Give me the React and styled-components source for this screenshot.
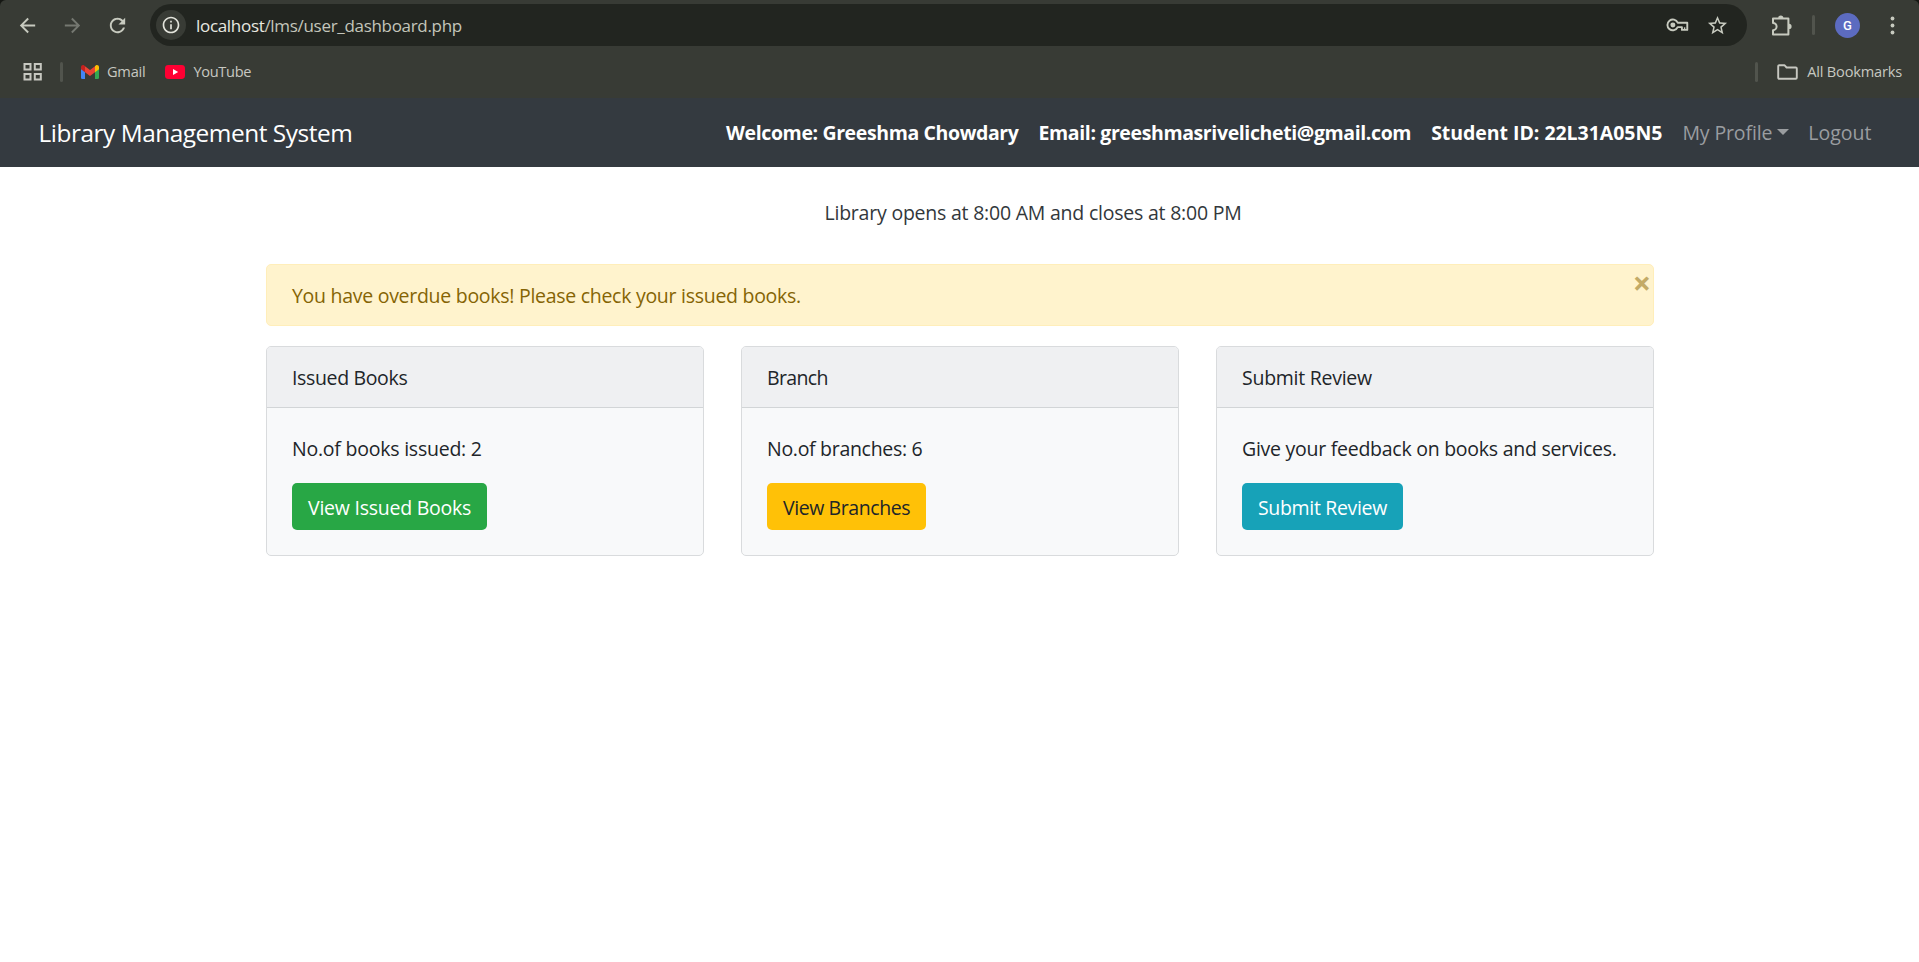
import React from "react";
import styled, { createGlobalStyle } from "styled-components";

const GlobalStyle = createGlobalStyle`
  *, *::before, *::after { box-sizing: border-box; }
  body {
    margin: 0;
    background: #fff;
    color: #212529;
    font-family: "Open Sans", "Noto Sans", sans-serif;
    font-size: 19.5px;
    line-height: 30px;
    overflow: hidden;
  }
`;

/* ---------- Browser chrome ---------- */

const Chrome = styled.header`
  height: 98px;
  background: #383b35;
  border-radius: 6px 6px 0 0;
  color: #c7c8c1;
`;

const ChromeFrame = styled.div`
  background: #151713;
`;

const Toolbar = styled.div`
  display: flex;
  align-items: center;
  height: 50px;
  padding: 0 15px 0 16px;
`;

const IconButton = styled.button`
  display: flex;
  align-items: center;
  justify-content: center;
  width: 23px;
  height: 23px;
  margin: 0 ${(p) => p.$gap || 0}px 0 0;
  padding: 0;
  border: 0;
  background: none;
  color: ${(p) => (p.$muted ? "#757871" : "#c7cabf")};
`;

const AddressBar = styled.div`
  display: flex;
  align-items: center;
  flex: 1;
  height: 42px;
  margin-right: 23px;
  padding: 0 20px 0 6px;
  border-radius: 21px;
  background: #222520;
`;

const SiteInfo = styled.span`
  display: flex;
  align-items: center;
  justify-content: center;
  width: 30px;
  height: 30px;
  border-radius: 50%;
  background: #383b35;
  color: #e3e4dc;
`;

const Url = styled.span`
  flex: 1;
  margin-left: 10px;
  padding-top: 1px;
  font-size: 17px;
  letter-spacing: -0.31px;
  color: #c4c5bb;
`;

const Host = styled.span`
  color: #e8e9e0;
`;

const Divider = styled.span`
  width: 3px;
  height: 20px;
  border-radius: 2px;
  background: #51544d;
`;

const Avatar = styled.span`
  display: flex;
  align-items: center;
  justify-content: center;
  width: 25px;
  height: 25px;
  margin: 0 21px 0 20px;
  border-radius: 50%;
  background: #5c6bc0;
  color: #fff;
  font: 500 13px Roboto, sans-serif;
`;

const BookmarkBar = styled.div`
  display: flex;
  align-items: center;
  height: 43px;
  padding: 0 17px 0 23px;
  font-size: 14.6px;
  line-height: 20px;
`;

const Bookmark = styled.span`
  display: flex;
  align-items: center;
  gap: ${(p) => p.$gap}px;
  margin-left: ${(p) => p.$left}px;
  letter-spacing: ${(p) => p.$tracking}px;
`;

const BookmarkLabel = styled.span`
  padding-bottom: 2px;
`;

const Spacer = styled.span`
  flex: 1;
`;

/* ---------- Page ---------- */

const Navbar = styled.nav`
  display: flex;
  align-items: center;
  justify-content: space-between;
  height: 69px;
  padding: 0 37.5px 0 38.5px;
  background: #343a40;
  color: #fff;
`;

const Brand = styled.span`
  font-size: 24.4px;
  letter-spacing: -0.46px;
`;

const NavGroup = styled.div`
  display: flex;
  align-items: center;
`;

const NavText = styled.strong`
  padding: 0 10px;
  font-weight: 700;
  letter-spacing: ${(p) => p.$tracking}px;
`;

const NavLink = styled.span`
  display: flex;
  align-items: center;
  padding: 0 10px;
  color: #9a9da0;
  letter-spacing: ${(p) => p.$tracking}px;
`;

const Caret = styled.i`
  margin: -2px -1px 0 5px;
  border: 6px solid transparent;
  border-top-color: currentColor;
  border-bottom: 0;
`;

const Notice = styled.p`
  margin: 31px 0 36px;
  padding-left: 824.5px;
  color: #32373b;
  letter-spacing: -0.22px;
`;

const Container = styled.main`
  width: 1388px;
  margin: 0 auto 0 266px;
`;

const Alert = styled.div`
  position: relative;
  height: 62px;
  margin-bottom: 20px;
  padding: 16px 25px 14px;
  border: 1px solid #ffeeba;
  border-radius: 5px;
  background: #fff3cd;
  color: #856404;
  letter-spacing: -0.28px;
`;

const CloseButton = styled.button`
  position: absolute;
  top: 6px;
  right: 1px;
  width: 20px;
  height: 24px;
  padding: 0;
  border: 0;
  background: none;
  color: #c3aa66;
  font: 700 32px/24px "Open Sans", sans-serif;
`;

const CardGrid = styled.div`
  display: grid;
  grid-template-columns: repeat(3, 438px);
  justify-content: space-between;
`;

const Card = styled.section`
  border: 1px solid #d9dbdd;
  border-radius: 5px;
  background: #f8f9fa;
  overflow: hidden;
`;

const CardHeader = styled.div`
  height: 61px;
  padding: 16px 25px 14px;
  border-bottom: 1px solid #d2d5d7;
  background: #eff0f2;
  letter-spacing: ${(p) => p.$tracking}px;
`;

const CardBody = styled.div`
  padding: 26px 25px 25px;
`;

const CardText = styled.p`
  margin: 0 0 19px;
  letter-spacing: ${(p) => p.$tracking}px;
`;

const tones = {
  success: ["#28a745", "#fff"],
  warning: ["#ffc107", "#212529"],
  info: ["#17a2b8", "#fff"],
};

const Button = styled.button`
  display: block;
  height: 47px;
  padding: 3px 16px 0;
  border: 0;
  border-radius: 5px;
  background: ${(p) => tones[p.$tone][0]};
  color: ${(p) => tones[p.$tone][1]};
  font: inherit;
  letter-spacing: ${(p) => p.$tracking}px;
`;

/* ---------- Icons ---------- */

const Glyph = ({ d, size = 23 }) => (
  <svg width={size} height={size} viewBox="0 0 24 24" fill="currentColor">
    <path d={d} />
  </svg>
);

const BACK = "M20 11H7.83l5.59-5.59L12 4l-8 8 8 8 1.41-1.41L7.83 13H20v-2z";
const FORWARD = "M12 4l-1.41 1.41L16.17 11H4v2h12.17l-5.58 5.59L12 20l8-8z";
const RELOAD =
  "M17.65 6.35C16.2 4.9 14.21 4 12 4c-4.42 0-7.99 3.58-7.99 8s3.57 8 7.99 8c3.73 0 6.84-2.55 7.73-6h-2.08c-.82 2.33-3.04 4-5.65 4-3.31 0-6-2.69-6-6s2.69-6 6-6c1.66 0 3.14.69 4.22 1.78L13 11h7V4l-2.35 2.35z";
const INFO =
  "M11 7h2v2h-2zm0 4h2v6h-2zm1-9C6.48 2 2 6.48 2 12s4.48 10 10 10 10-4.48 10-10S17.52 2 12 2zm0 18c-4.41 0-8-3.59-8-8s3.59-8 8-8 8 3.59 8 8-3.59 8-8 8z";
const STAR =
  "M22 9.24l-7.19-.62L12 2 9.19 8.63 2 9.24l5.46 4.73L5.82 21 12 17.27 18.18 21l-1.63-7.03L22 9.24zM12 15.4l-3.76 2.27 1-4.28-3.32-2.88 4.38-.38L12 6.1l1.71 4.04 4.38.38-3.32 2.88 1 4.28L12 15.4z";

const KeyIcon = () => (
  <svg width="24" height="16" viewBox="0 0 24 16" fill="none" stroke="currentColor" strokeWidth="2">
    <path d="M12.2 5.6A5.6 5.6 0 1 0 12.2 10.2H16.6V13.1H22.2V5.6Z" strokeLinejoin="round" />
    <path d="M19.4 13V10.4" strokeWidth="1.5" />
    <circle cx="7.2" cy="8" r="2.6" fill="currentColor" stroke="none" />
  </svg>
);

const PuzzleIcon = () => (
  <svg width="23" height="23" viewBox="0 0 23 23">
    <path
      d="M3 4.6h15.4v16H3v-4.4a3.6 3.6 0 0 0 0-7.2z"
      fill="none"
      stroke="currentColor"
      strokeWidth="2"
      strokeLinejoin="round"
    />
    <path d="M8.2 4a2.6 2.6 0 0 1 5.2 0zM19 9.8a2.6 2.6 0 0 1 0 5.2z" fill="currentColor" />
  </svg>
);

const MoreIcon = () => (
  <svg width="5" height="19" viewBox="0 0 5 19" fill="currentColor">
    <circle cx="2.5" cy="2.5" r="1.9" />
    <circle cx="2.5" cy="9.5" r="1.9" />
    <circle cx="2.5" cy="16.5" r="1.9" />
  </svg>
);

const AppsIcon = () => (
  <svg width="20" height="20" viewBox="0 0 20 20" fill="none" stroke="currentColor" strokeWidth="2">
    <path d="M1.500 2h6v5.500h-6zM11.800 2h6v5.500h-6zM1.500 12h6v5.500h-6zM11.800 12h6v5.500h-6z" />
  </svg>
);

const GmailIcon = () => (
  <svg width="18" height="14" viewBox="0 0 18 14">
    <path d="M0 3h4v11H1.3A1.3 1.3 0 0 1 0 12.7z" fill="#4285f4" />
    <path d="M14 3h4v9.7a1.3 1.3 0 0 1-1.3 1.3H14z" fill="#34a853" />
    <path d="M14 1l.8-.6C16.1-.5 18 .3 18 2v2.2l-4 3z" fill="#fbbc04" />
    <path d="M4 1.2l5 3.7 5-3.7v6L9 11 4 7.200z" fill="#ea4335" />
    <path d="M0 2C0 .3 1.900-.5 3.200.4L4 1v6.200l-4-3z" fill="#c5221f" />
  </svg>
);

const YouTubeIcon = () => (
  <svg width="20" height="14" viewBox="0 0 20 14">
    <rect width="20" height="14" rx="3.4" fill="#ff0033" />
    <path d="M8 4l5.200 3L8 10z" fill="#fff" />
  </svg>
);

const FolderIcon = () => (
  <svg width="21" height="16" viewBox="0 0 21 16" fill="none" stroke="currentColor" strokeWidth="1.9" strokeLinejoin="round">
    <path d="M1.200 2.200a1 1 0 0 1 1-1h5.200l2.200 2.300h9.200a1 1 0 0 1 1 1v9.300a1 1 0 0 1-1 1H2.200a1 1 0 0 1-1-1z" />
  </svg>
);

const cards = [
  {
    title: ["Issued Books", -0.35],
    text: ["No.of books issued: 2", -0.23],
    action: ["View Issued Books", -0.24],
    tone: "success",
  },
  {
    title: ["Branch", -0.65],
    text: ["No.of branches: 6", -0.3],
    action: ["View Branches", -0.42],
    tone: "warning",
  },
  {
    title: ["Submit Review", -0.26],
    text: ["Give your feedback on books and services.", -0.26],
    action: ["Submit Review", -0.33],
    tone: "info",
  },
];

export default function App() {
  return (
    <>
      <GlobalStyle />
      <ChromeFrame>
        <Chrome>
          <Toolbar>
            <IconButton $gap={22}><Glyph d={BACK} /></IconButton>
            <IconButton $gap={22} $muted><Glyph d={FORWARD} /></IconButton>
            <IconButton $gap={21}><Glyph d={RELOAD} /></IconButton>
            <AddressBar>
              <SiteInfo><Glyph d={INFO} size={20} /></SiteInfo>
              <Url><Host>localhost</Host>/lms/user_dashboard.php</Url>
              <IconButton $gap={17}><KeyIcon /></IconButton>
              <IconButton $gap={-2}><Glyph d={STAR} /></IconButton>
            </AddressBar>
            <IconButton $gap={19}><PuzzleIcon /></IconButton>
            <Divider />
            <Avatar>G</Avatar>
            <IconButton><MoreIcon /></IconButton>
          </Toolbar>
          <BookmarkBar>
            <AppsIcon />
            <Bookmark $left={17} $gap={18}><Divider /></Bookmark>
            <Bookmark $left={18} $gap={8} $tracking={-0.24}>
              <GmailIcon />
              <BookmarkLabel>Gmail</BookmarkLabel>
            </Bookmark>
            <Bookmark $left={20} $gap={8} $tracking={-0.31}>
              <YouTubeIcon />
              <BookmarkLabel>YouTube</BookmarkLabel>
            </Bookmark>
            <Spacer />
            <Divider />
            <Bookmark $left={19} $gap={9} $tracking={-0.19}>
              <FolderIcon />
              <BookmarkLabel>All Bookmarks</BookmarkLabel>
            </Bookmark>
          </BookmarkBar>
        </Chrome>
      </ChromeFrame>

      <Navbar>
        <Brand>Library Management System</Brand>
        <NavGroup>
          <NavText $tracking={-0.38}>Welcome: Greeshma Chowdary</NavText>
          <NavText $tracking={-0.38}>Email: greeshmasrivelicheti@gmail.com</NavText>
          <NavText $tracking={-0.04}>Student ID: 22L31A05N5</NavText>
          <NavLink $tracking={-0.12}>My Profile<Caret /></NavLink>
          <NavLink $tracking={0}>Logout</NavLink>
        </NavGroup>
      </Navbar>

      <Notice>Library opens at 8:00 AM and closes at 8:00 PM</Notice>

      <Container>
        <Alert role="alert">
          You have overdue books! Please check your issued books.
          <CloseButton aria-label="Close">×</CloseButton>
        </Alert>
        <CardGrid>
          {cards.map((c) => (
            <Card key={c.title[0]}>
              <CardHeader $tracking={c.title[1]}>{c.title[0]}</CardHeader>
              <CardBody>
                <CardText $tracking={c.text[1]}>{c.text[0]}</CardText>
                <Button $tone={c.tone} $tracking={c.action[1]}>{c.action[0]}</Button>
              </CardBody>
            </Card>
          ))}
        </CardGrid>
      </Container>
    </>
  );
}
